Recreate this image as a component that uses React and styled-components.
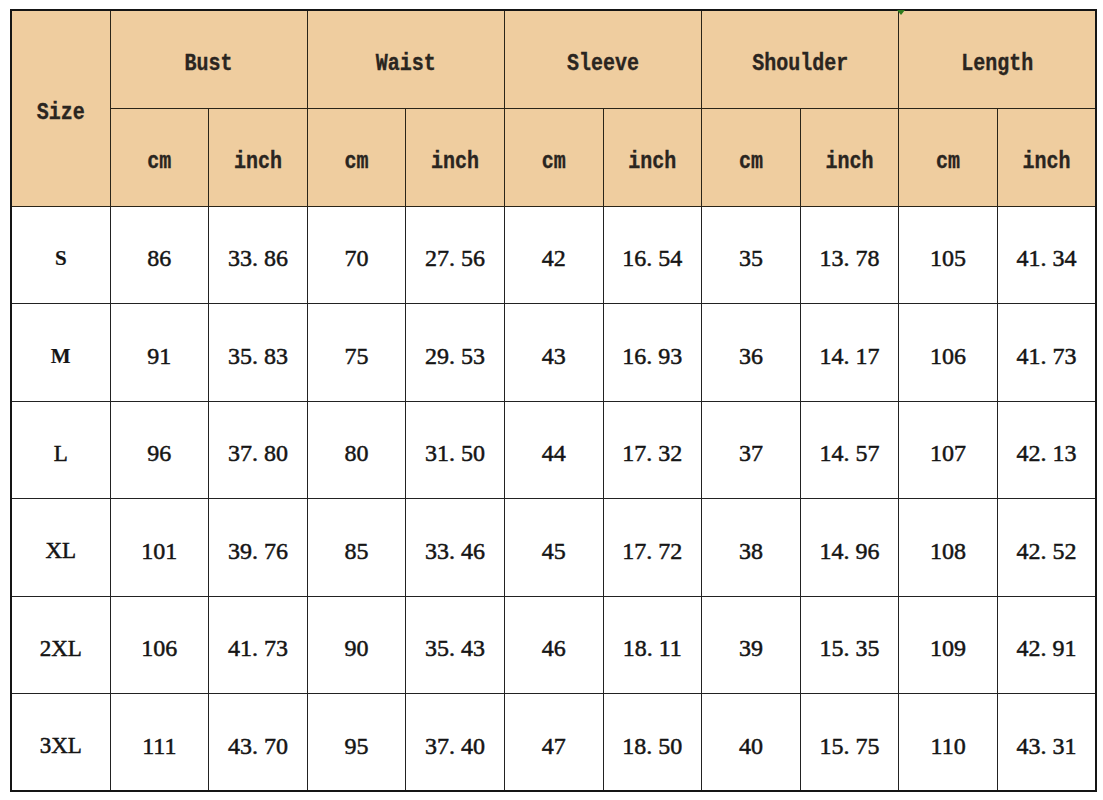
import React from 'react';
import styled, { createGlobalStyle } from 'styled-components';

const data = {
  groups: ['Bust', 'Waist', 'Sleeve', 'Shoulder', 'Length'],
  rows: [
    { size: 'S', bold: true, values: ['86', '33.86', '70', '27.56', '42', '16.54', '35', '13.78', '105', '41.34'] },
    { size: 'M', bold: true, values: ['91', '35.83', '75', '29.53', '43', '16.93', '36', '14.17', '106', '41.73'] },
    { size: 'L', values: ['96', '37.80', '80', '31.50', '44', '17.32', '37', '14.57', '107', '42.13'] },
    { size: 'XL', values: ['101', '39.76', '85', '33.46', '45', '17.72', '38', '14.96', '108', '42.52'] },
    { size: '2XL', values: ['106', '41.73', '90', '35.43', '46', '18.11', '39', '15.35', '109', '42.91'] },
    { size: '3XL', values: ['111', '43.70', '95', '37.40', '47', '18.50', '40', '15.75', '110', '43.31'] }
  ]
};

const Num = ({ value }) => {
  const [whole, frac] = value.split('.');
  if (frac === undefined) return <>{value}</>;
  return (
    <>
      {whole}
      <Dot>.</Dot>
      {frac}
    </>
  );
};

const App = () => {
  return (
    <>
      <GlobalStyle />
      <Page>
        <Table>
          <colgroup>
            <col style={{ width: 99 }} />
            {Array.from({ length: 10 }).map((_, i) => (
              <col key={i} style={{ width: 98.6 }} />
            ))}
          </colgroup>
          <thead>
            <HeadRow>
              <HeadCell rowSpan={2}>
                <Label>Size</Label>
              </HeadCell>
              {data.groups.map((g, i) => (
                <HeadCell key={g} colSpan={2} $mark={i === 4}>
                  <Label>{g}</Label>
                </HeadCell>
              ))}
            </HeadRow>
            <HeadRow>
              {data.groups.map((g) => (
                <React.Fragment key={g}>
                  <HeadCell>
                    <Label>cm</Label>
                  </HeadCell>
                  <HeadCell>
                    <Label>inch</Label>
                  </HeadCell>
                </React.Fragment>
              ))}
            </HeadRow>
          </thead>
          <tbody>
            {data.rows.map((r) => (
              <BodyRow key={r.size}>
                <SizeCell $bold={r.bold}>{r.size}</SizeCell>
                {r.values.map((v, i) => (
                  <Cell key={i}>
                    <Num value={v} />
                  </Cell>
                ))}
              </BodyRow>
            ))}
          </tbody>
        </Table>
      </Page>
    </>
  );
};

const GlobalStyle = createGlobalStyle`
  html, body {
    margin: 0;
    padding: 0;
    background: #ffffff;
  }
`;

const Page = styled.div`
  width: 1103px;
  height: 800px;
  padding: 9px 0 0 10px;
  box-sizing: border-box;
  background: #ffffff;
`;

const Table = styled.table`
  border-collapse: collapse;
  table-layout: fixed;
  width: 1087px;
  border: 2px solid #151515;
`;

const HeadRow = styled.tr`
  height: 98px;
`;

const BodyRow = styled.tr`
  height: 97.5px;
`;

const HeadCell = styled.th`
  position: relative;
  border: 1px solid #2a2418;
  background: #efcd9f;
  color: #2a2520;
  font-family: 'Liberation Mono', 'DejaVu Sans Mono', monospace;
  font-weight: bold;
  font-size: 20px;
  text-align: center;
  vertical-align: middle;
  padding: 9px 0 0 0;

  ${(p) =>
    p.$mark &&
    `
    &::before {
      content: '';
      position: absolute;
      left: -2px;
      top: -1px;
      width: 0;
      height: 0;
      border-left: 4px solid transparent;
      border-right: 4px solid transparent;
      border-top: 5px solid #2f7a1e;
    }
  `}
`;

const Label = styled.span`
  display: inline-block;
  transform: scaleY(1.22);
  -webkit-text-stroke: 0.3px #2a2520;
`;

const Cell = styled.td`
  border: 1px solid #222222;
  background: #ffffff;
  color: #151515;
  font-family: 'Liberation Serif', 'Times New Roman', serif;
  font-size: 24px;
  text-align: center;
  vertical-align: middle;
  padding: 8px 0 0 0;
  -webkit-text-stroke: 0.5px #151515;
`;

const SizeCell = styled(Cell)`
  font-size: ${(p) => (p.$bold ? '21px' : '23px')};
  font-weight: ${(p) => (p.$bold ? 'bold' : 'normal')};
  -webkit-text-stroke: ${(p) => (p.$bold ? '0.2px' : '0.5px')} #151515;
`;

const Dot = styled.span`
  margin-right: 6px;
`;

export default App;
